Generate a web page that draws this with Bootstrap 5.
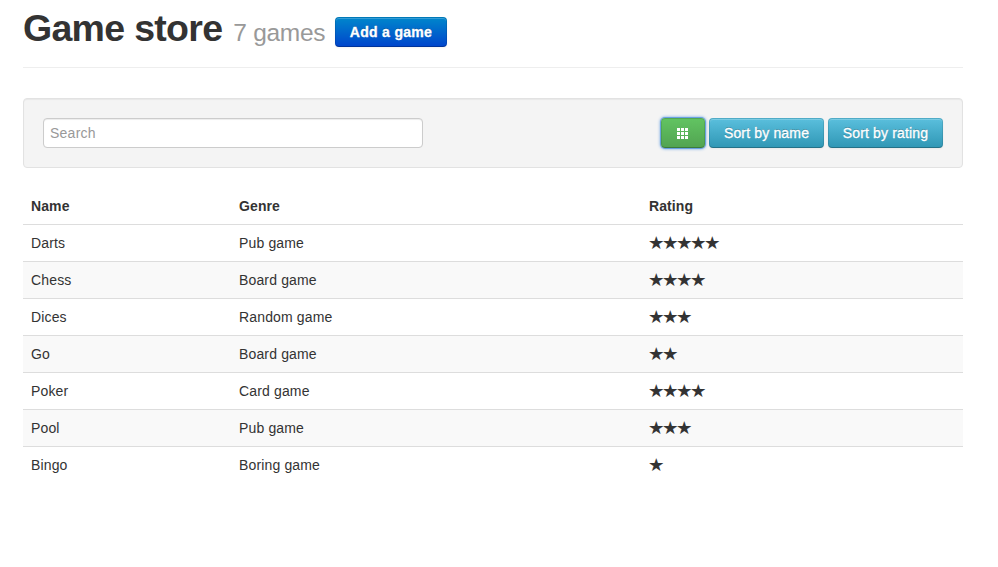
<!DOCTYPE html>
<html lang="en">
<head>
<meta charset="utf-8">
<meta name="viewport" content="width=device-width, initial-scale=1">
<title>Game store</title>
<link href="https://cdn.jsdelivr.net/npm/bootstrap@5.3.0/dist/css/bootstrap.min.css" rel="stylesheet">
<style>
body { font: 14px/20px "Liberation Sans", Arial, sans-serif; color: #333; }
.store { width: 940px; margin-left: 23px; }
.store-head { height: 68px; border-bottom: 1px solid #eee; margin-bottom: 30px; }
.store-head h1 { width: 312px; font-size: 37.5px; line-height: 40px; padding-top: 8px; letter-spacing: -.7px; white-space: nowrap; }
.store-head .count { font-size: 24.5px; color: #999; margin-left: 11px; letter-spacing: -.3px; }
.store-head .btn { margin-top: 17px; width: 112px; letter-spacing: .3px; }
.btn { height: 30px; padding: 4px 0; font-size: 14px; line-height: 20px; border-radius: 4px; border: 1px solid;
  color: #fff; text-shadow: 0 -1px 0 rgba(0,0,0,.25); white-space: nowrap;
  box-shadow: inset 0 1px 0 rgba(255,255,255,.2), 0 1px 2px rgba(0,0,0,.05); }
.btn:hover { color: #fff; }
.btn-add { -webkit-text-stroke: .3px #fff; background: linear-gradient(#0088cc, #0044cc) border-box; border-color: rgba(0,0,0,.1) rgba(0,0,0,.1) rgba(0,0,0,.25); }
.btn-sort { width: 115px; letter-spacing: .16px; -webkit-text-stroke: .3px #fff; background: linear-gradient(#5bc0de, #2f96b4) border-box; border-color: rgba(0,0,0,.1) rgba(0,0,0,.1) rgba(0,0,0,.25); }
.btn-view { width: 44px; background: linear-gradient(#62c462, #51a351) border-box; border-color: rgba(0,0,0,.15) rgba(0,0,0,.1) rgba(0,0,0,.25);
  box-shadow: 0 0 0 1px rgba(80,146,220,.65), 0 0 3px 1px #6ba3e0; }
.btn-view svg { display: block; margin: 1px 0 0 15px; }
.toolbar { height: 70px; padding: 19px; background: #f4f4f4; border: 1px solid #e2e2e2; border-radius: 4px;
  box-shadow: inset 0 1px 1px rgba(0,0,0,.05); margin-bottom: 20px; }
.toolbar .form-control { width: 380px; height: 30px; padding: 4px 6px; font-size: 14px; line-height: 20px; letter-spacing: .25px; border: 1px solid #ccc;
  border-radius: 4px; box-shadow: inset 0 1px 1px rgba(0,0,0,.075); }
.toolbar .form-control::placeholder { color: #999; }
.games { table-layout: fixed; --bs-table-color: #333; }
.games > :not(caption) > * > * { padding: 8px; line-height: 20px; color: #333; border: 0; background: none; box-shadow: none; }
.games thead th { height: 36px; letter-spacing: .1px; }
.games tbody td { border-top: 1px solid #ddd; height: 37px; letter-spacing: .15px; }
.games tbody tr:nth-child(even) td { background: #f9f9f9; }
.games tbody .stars { font-family: "Noto Sans CJK JP", "DejaVu Sans", sans-serif; font-size: 14.5px; letter-spacing: -.5px; padding: 7px 8px 9px; -webkit-text-stroke: .1px #333; }
</style>
</head>
<body>
<main class="store">
  <header class="store-head d-flex align-items-start">
    <h1 class="fw-bold mb-0">Game store<span class="count fw-normal">7 games</span></h1>
    <button type="button" class="btn btn-add fw-bold">Add a game</button>
  </header>
  <section class="toolbar d-flex justify-content-between">
    <input type="text" class="form-control" placeholder="Search" aria-label="Search">
    <div class="d-flex gap-1">
      <button type="button" class="btn btn-view" aria-label="Toggle grid view">
        <svg width="11" height="11" viewBox="0 0 11 11" fill="#fff" shape-rendering="crispEdges"><path d="M0 0h3v3H0zM4 0h3v3H4zM8 0h3v3H8zM0 4h3v3H0zM4 4h3v3H4zM8 4h3v3H8zM0 8h3v3H0zM4 8h3v3H4zM8 8h3v3H8z"/></svg>
      </button>
      <button type="button" class="btn btn-sort">Sort by name</button>
      <button type="button" class="btn btn-sort">Sort by rating</button>
    </div>
  </section>
  <table class="table games mb-0">
    <colgroup><col style="width:208px"><col style="width:410px"><col></colgroup>
    <thead><tr><th>Name</th><th>Genre</th><th>Rating</th></tr></thead>
    <tbody>
      <tr><td>Darts</td><td>Pub game</td><td class="stars">★★★★★</td></tr>
      <tr><td>Chess</td><td>Board game</td><td class="stars">★★★★</td></tr>
      <tr><td>Dices</td><td>Random game</td><td class="stars">★★★</td></tr>
      <tr><td>Go</td><td>Board game</td><td class="stars">★★</td></tr>
      <tr><td>Poker</td><td>Card game</td><td class="stars">★★★★</td></tr>
      <tr><td>Pool</td><td>Pub game</td><td class="stars">★★★</td></tr>
      <tr><td>Bingo</td><td>Boring game</td><td class="stars">★</td></tr>
    </tbody>
  </table>
</main>
<script src="https://cdn.jsdelivr.net/npm/bootstrap@5.3.0/dist/js/bootstrap.bundle.min.js"></script>
</body>
</html>
